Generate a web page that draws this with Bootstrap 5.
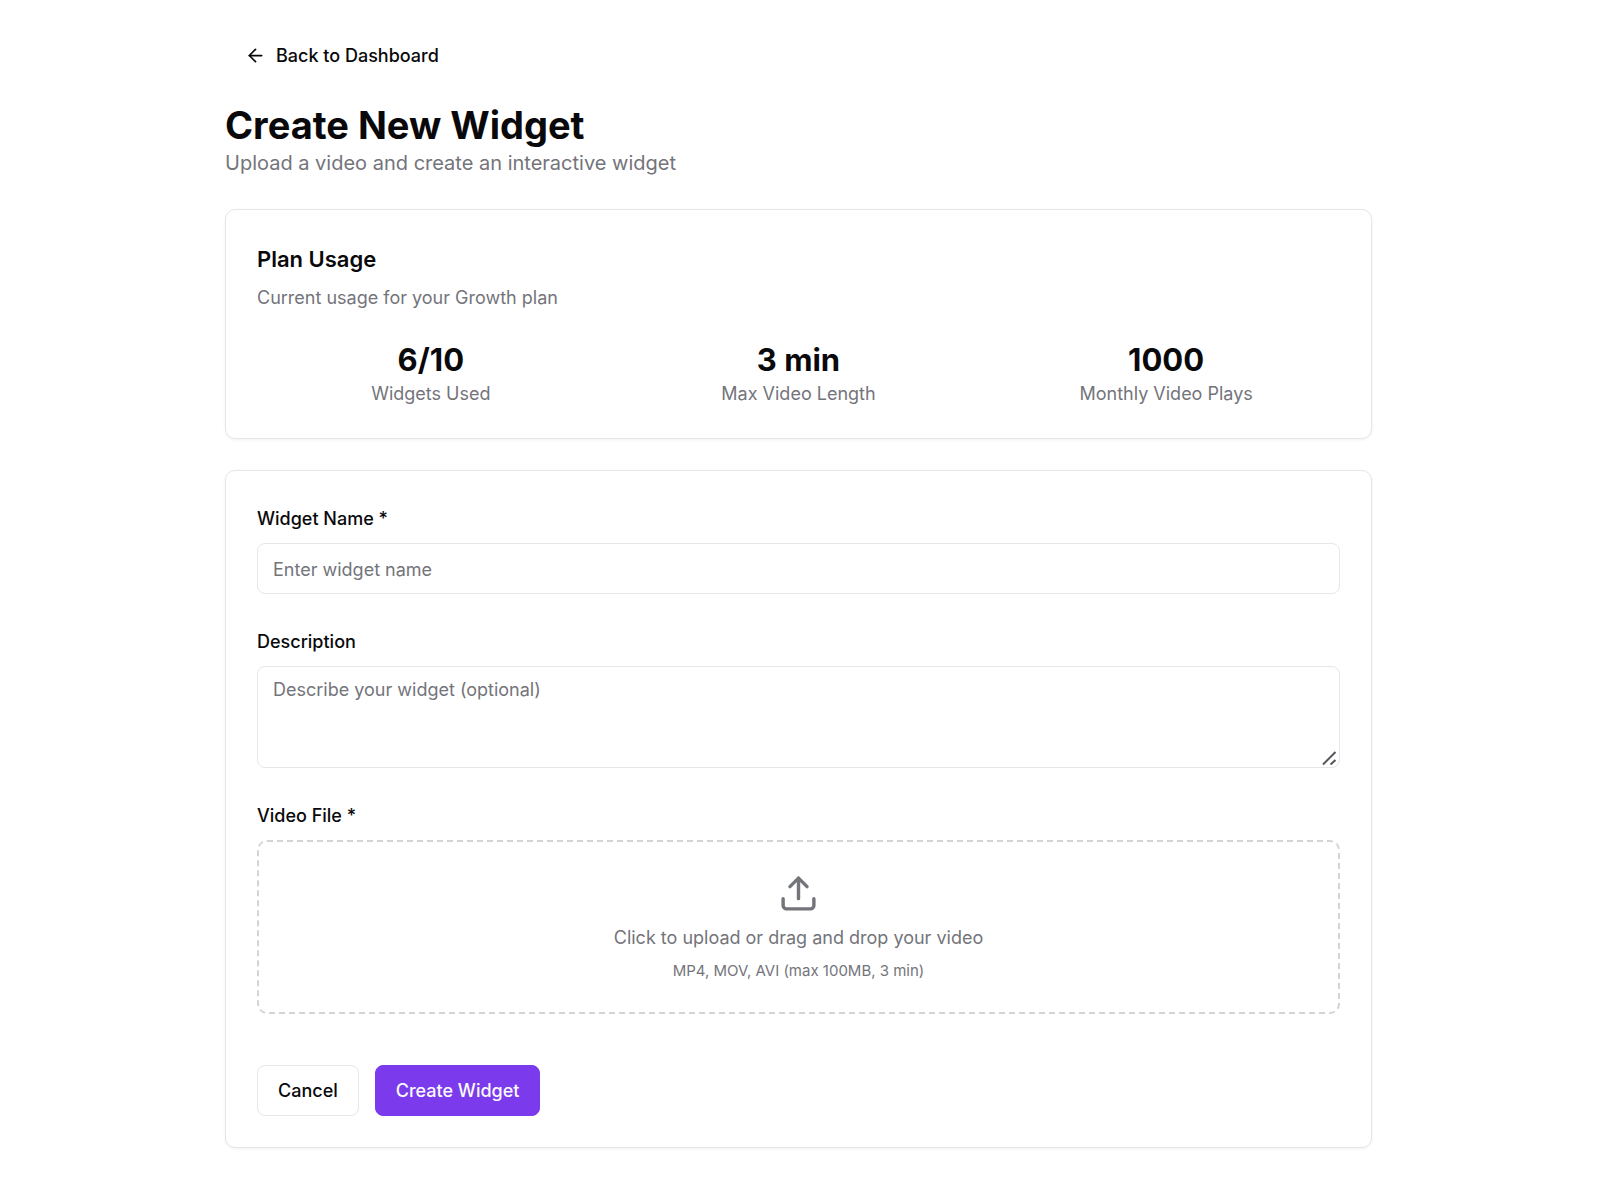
<!DOCTYPE html>
<html lang="en">
<head>
<meta charset="utf-8">
<meta name="viewport" content="width=device-width, initial-scale=1">
<title>Create New Widget</title>
<link href="https://cdn.jsdelivr.net/npm/bootstrap@5.3.0/dist/css/bootstrap.min.css" rel="stylesheet">
<style>
  :root { --ink: #09090b; --muted: #74747b; --line: #e6e6e9; --brand: #7c3aed; }
  body { font-family: Inter, "Liberation Sans", sans-serif; font-size: 18px; line-height: 26px; color: var(--ink); padding: 31px 3px 30px 0; }
  .page { max-width: 1147px; }
  .btn { --bs-btn-font-size: 18px; --bs-btn-font-weight: 500; --bs-btn-line-height: 25px; --bs-btn-padding-x: 20px; --bs-btn-padding-y: 12px; --bs-btn-border-radius: 8px; --bs-btn-color: var(--ink); }
  .btn-back { gap: 10px; margin-bottom: 21px; }
  .btn-cancel { --bs-btn-border-color: var(--line); --bs-btn-hover-bg: #f4f4f5; --bs-btn-hover-border-color: var(--line); }
  .btn-brand { --bs-btn-color: #fafafa; --bs-btn-bg: var(--brand); --bs-btn-border-color: var(--brand); --bs-btn-hover-color: #fff; --bs-btn-hover-bg: #6d28d9; --bs-btn-hover-border-color: #6d28d9; }
  .page-title { font-size: 38px; line-height: 48px; font-weight: 700; }
  .page-subtitle { font-size: 20px; line-height: 29px; }
  .soft { color: var(--muted); }
  .card { --bs-card-border-color: var(--line); --bs-card-border-radius: 10px; --bs-card-spacer-x: 31px; --bs-card-spacer-y: 31px; --bs-card-color: var(--ink); box-shadow: 0 1px 3px rgba(0, 0, 0, .06); margin-top: 31px; }
  .plan-title { font-size: 22px; line-height: 36px; font-weight: 600; margin-bottom: 8px; }
  .plan-note { margin-bottom: 28px; }
  .stats { --bs-gutter-x: 20px; }
  .stat-value { font-size: 31px; line-height: 42px; font-weight: 700; }
  .field { margin-bottom: 31px; }
  .form-label { font-weight: 500; line-height: 33px; margin-bottom: 8px; display: block; }
  .form-control { font-size: 18px; line-height: 26px; padding: 13px 15px 10px; border-color: var(--line); border-radius: 8px; color: var(--ink); }
  .form-control::placeholder { color: var(--muted); }
  textarea.form-control { height: 102px; padding-top: 10px; resize: none; }
  .grip { right: 3px; bottom: 2px; width: 16px; height: 16px; pointer-events: none; }
  .dropzone { border: 2px dashed #d4d4d8; border-radius: 10px; padding: 31px 31px 28px; cursor: pointer; margin-bottom: 51px; }
  .drop-hint { margin-top: 10px; line-height: 28px; }
  .drop-limits { font-size: 15px; line-height: 20px; margin-top: 9px; margin-bottom: 3px; }
  .actions { gap: 16px; }
</style>
<script src="https://cdn.jsdelivr.net/npm/bootstrap@5.3.0/dist/js/bootstrap.bundle.min.js"></script>
</head>
<body class="bg-white">
<main class="page container-fluid p-0 mx-auto">
  <a href="#" class="btn btn-back border-0 d-inline-flex align-items-center">
    <svg width="21" height="21" viewBox="0 0 24 24" fill="none" stroke="currentColor" stroke-width="2" stroke-linecap="round" stroke-linejoin="round" aria-hidden="true"><path d="m12 19-7-7 7-7"/><path d="M19 12H5"/></svg>
    Back to Dashboard
  </a>
  <h1 class="page-title mb-0">Create New Widget</h1>
  <p class="page-subtitle soft mb-0">Upload a video and create an interactive widget</p>

  <section class="card">
    <div class="card-body">
      <h2 class="plan-title">Plan Usage</h2>
      <p class="plan-note soft">Current usage for your Growth plan</p>
      <div class="row row-cols-3 stats text-center">
        <div class="col"><div class="stat-value">6/10</div><div class="soft">Widgets Used</div></div>
        <div class="col"><div class="stat-value">3 min</div><div class="soft">Max Video Length</div></div>
        <div class="col"><div class="stat-value">1000</div><div class="soft">Monthly Video Plays</div></div>
      </div>
    </div>
  </section>

  <section class="card">
    <form class="card-body">
      <div class="field">
        <label class="form-label" for="name">Widget Name *</label>
        <input class="form-control" type="text" id="name" placeholder="Enter widget name">
      </div>
      <div class="field">
        <label class="form-label" for="desc">Description</label>
        <div class="position-relative">
          <textarea class="form-control" id="desc" placeholder="Describe your widget (optional)"></textarea>
          <svg class="grip position-absolute" viewBox="0 0 16 16" fill="none" stroke="#55555a" stroke-width="2" aria-hidden="true"><path d="M2 14.500 14.500 2M9.500 14.500 14.500 10"/></svg>
        </div>
      </div>
      <label class="form-label" for="video">Video File *</label>
      <input class="visually-hidden" type="file" id="video" accept="video/*">
      <label class="dropzone soft d-flex flex-column align-items-center text-center" for="video">
        <svg width="41" height="41" viewBox="0 0 24 24" fill="none" stroke="currentColor" stroke-width="2" stroke-linecap="round" stroke-linejoin="round" aria-hidden="true"><path d="M21 15v4a2 2 0 0 1-2 2H5a2 2 0 0 1-2-2v-4"/><path d="m17 8-5-5-5 5"/><path d="M12 3v12"/></svg>
        <span class="drop-hint">Click to upload or drag and drop your video</span>
        <span class="drop-limits">MP4, MOV, AVI (max 100MB, 3 min)</span>
      </label>
      <div class="actions d-flex">
        <button type="button" class="btn btn-cancel">Cancel</button>
        <button type="submit" class="btn btn-brand">Create Widget</button>
      </div>
    </form>
  </section>
</main>
</body>
</html>
